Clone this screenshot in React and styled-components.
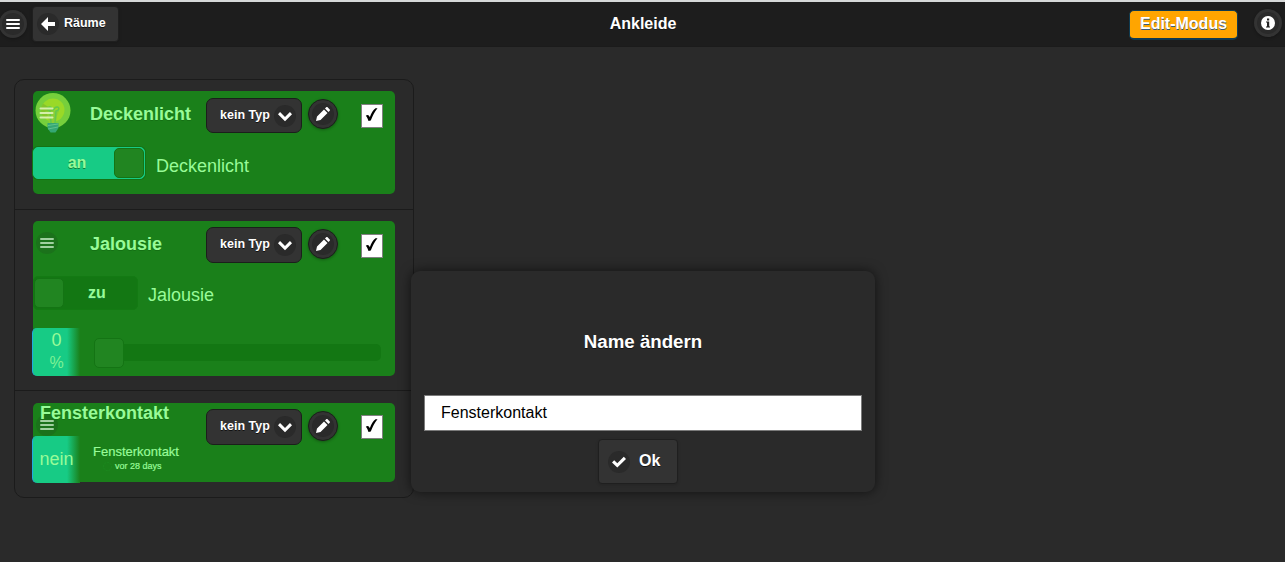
import styled, { createGlobalStyle } from 'styled-components'

const GlobalStyle = createGlobalStyle`
* {
    box-sizing: border-box;
}
body {
    margin: 0;
    background-color: #2a2a2a;
    font-family: "Liberation Sans", Arial, sans-serif;
    line-height: 1;
    color: #fff;
    overflow: hidden;
}
svg {
    display: block;
}
`

const Page = styled.div`
height: 562px;
border-top: 2px solid #d6d8d8;
`

const Header = styled.header`
height: 45px;
display: grid;
grid-template-columns: 1fr auto 1fr;
background-color: #1d1d1d;
border-bottom: 1px solid #1b1b1b;
`

const HeaderSide = styled.div`
display: flex;
align-items: flex-start;
justify-content: ${props => props.$end ? "flex-end" : "flex-start"};
`

const HeaderTitle = styled.h1`
margin: 0;
padding: 14px 0 0 1px;
font-size: 16px;
text-shadow: 0 1px 0 #111;
`

const RoundButton = styled.button`
width: ${props => props.$size || 28}px;
height: ${props => props.$size || 28}px;
margin: ${props => props.$margin || 0};
padding: 0;
display: flex;
align-items: center;
justify-content: center;
flex: none;
border-radius: 50%;
border: ${props => props.$dark ? "1px solid #1b1f1b" : "none"};
background-color: #333;
box-shadow: 0 1px 3px rgba(0, 0, 0, 0.3);
`

const Disc = styled.span`
width: 22px;
height: 22px;
flex: none;
display: flex;
align-items: center;
justify-content: center;
border-radius: 50%;
background-color: ${props => props.$color || "#2a2a2a"};
`

const BackButton = styled.button`
width: 87px;
height: 36px;
margin: 4px 0 0 5px;
padding: 0 0 0 4px;
display: flex;
align-items: center;
gap: 5px;
border: 1px solid #1f1f1f;
border-radius: 4px;
background-color: #333;
color: #fff;
font: bold 12.5px "Liberation Sans", Arial, sans-serif;
text-shadow: 0 1px 0 #111;
box-shadow: 0 1px 3px rgba(0, 0, 0, 0.15);
`

const BackText = styled.span`
padding-bottom: 2px;
`

const EditButton = styled.button`
width: 109px;
height: 30px;
margin: 8px 16px 0 0;
padding: 0 0 1px;
border: 1px solid #0f3a50;
border-bottom-width: 2px;
border-radius: 5px;
background-color: #ffa500;
color: #fff;
font: bold 16px "Liberation Sans", Arial, sans-serif;
text-shadow: 0 1px 0 #3b5a78;
`

const List = styled.ul`
width: 400px;
margin: 32px 0 0 14px;
padding: 0;
list-style: none;
border: 1px solid #1b1b1b;
border-radius: 10px;
`

const Item = styled.li`
padding: ${props => props.$padding};
& + & {
    border-top: 1px solid #1b1b1b;
}
`

const Card = styled.section`
position: relative;
height: ${props => props.$height}px;
border-radius: 5px;
background-color: #1a801a;
color: #98fb98;
`

const CardHead = styled.div`
height: ${props => props.$height}px;
display: grid;
grid-template-columns: 57px 116px 102px 53px auto;
align-items: start;
padding-top: 6px;
`

const Handle = styled.div`
position: relative;
margin: 5px 0 0 3px;
`

const Bulb = styled.svg`
position: absolute;
left: 2px;
top: 2px;
`

const CardTitle = styled.h2`
margin: ${props => props.$raised ? "-5px 0 0 -50px" : "8px 0 0"};
font-size: 18px;
white-space: nowrap;
position: relative;
text-shadow: 0 1px 0 #147014;
`

const Select = styled.button`
width: 96px;
height: ${props => props.$first ? 35 : 36}px;
margin-top: ${props => props.$first ? 1 : 0}px;
padding: 0 5px 0 13px;
display: flex;
align-items: center;
justify-content: space-between;
border: 1px solid #1b1f1b;
border-radius: 7px;
background-color: #333;
color: #fff;
font: bold 12.5px "Liberation Sans", Arial, sans-serif;
white-space: nowrap;
text-shadow: 0 1px 0 #111;
`

const SelectText = styled.span`
padding-bottom: 2px;
`

const Check = styled.div`
width: 22px;
height: 24px;
margin-top: ${props => props.$top}px;
border: 1px solid #808080;
background-color: #fff;
`

const SwitchRow = styled.div`
display: flex;
align-items: flex-start;
`

const Switch = styled.div`
width: ${props => props.$on ? 112 : 105}px;
height: ${props => props.$on ? 32 : 34}px;
padding: ${props => props.$on ? "0" : "1px 0 0"};
display: flex;
flex-direction: ${props => props.$on ? "row-reverse" : "row"};
border: 1px solid ${props => props.$on ? "#17cb85" : "#137a13"};
border-radius: 5px;
background-color: ${props => props.$on ? "#17cb85" : "#137713"};
box-shadow: ${props => props.$on ? "0 0 0 1px #147314" : "none"};
`

const Knob = styled.span`
width: 30px;
height: 30px;
flex: none;
border: 1px solid #147414;
border-radius: 5px;
background-color: #218521;
`

const SwitchText = styled.span`
flex: 1;
padding: ${props => props.$on ? "7px 0 0 6px" : "7px 7px 0 0"};
text-align: center;
font-size: 16px;
font-weight: bold;
text-shadow: 0 1px 0 #147f3a;
`

const SwitchLabel = styled.span`
margin: ${props => props.$on ? "10px 0 0 11px" : "10px 0 0 10px"};
font-size: 18px;
`

const ValueRow = styled.div`
display: flex;
align-items: flex-start;
margin-top: ${props => props.$top}px;
`

const Value = styled.div`
width: 48px;
height: ${props => props.$height}px;
margin-left: -1px;
padding: ${props => props.$pad}px 0 0;
display: flex;
flex-direction: column;
align-items: center;
gap: 6px;
font-size: 18px;
border-left: 1px solid #22aae0;
border-radius: 5px 0 0 5px;
background: linear-gradient(to right, #17cb85 34px, #1a801a 47px);
`

const Unit = styled.small`
font-size: 16px;
opacity: 0.8;
`

const Slider = styled.div`
width: 287px;
height: 30px;
margin: 10px 0 0 14px;
display: flex;
align-items: center;
`

const Track = styled.div`
flex: 1;
height: 17px;
margin: -1px 0 0 -1px;
border-radius: 0 5px 5px 0;
background-color: #137713;
`

const Contact = styled.div`
margin: 9px 0 0 13px;
font-size: 13px;
-webkit-text-stroke: 0.2px #98fb98;
`

const Since = styled.div`
display: flex;
align-items: center;
gap: 3px;
margin: 4px 0 0 10px;
font-size: 9px;
`

const Dialog = styled.div`
position: absolute;
left: 411px;
top: 271px;
width: 464px;
height: 221px;
padding: 61px 13px 0;
display: flex;
flex-direction: column;
align-items: center;
border-radius: 9px;
background-color: #2a2a2a;
box-shadow: 0 0 12px rgba(0, 0, 0, 0.6);
`

const DialogTitle = styled.h3`
margin: 0;
font-size: 18.7px;
line-height: 19px;
text-shadow: 0 1px 0 #111;
`

const Input = styled.input`
width: 438px;
height: 36px;
margin-top: 44px;
padding: 0 16px 1px;
border: 1px solid #7b7b7b;
border-radius: 0;
background-color: #fff;
color: #000;
font: 16px "Liberation Sans", Arial, sans-serif;
`

const OkButton = styled.button`
width: 80px;
height: 45px;
margin: 8px 10px 0 0;
padding: 0 0 0 9px;
display: flex;
align-items: center;
gap: 9px;
border: 1px solid #1f1f1f;
border-radius: 4px;
background-color: #333;
color: #fff;
font: bold 16px "Liberation Sans", Arial, sans-serif;
text-shadow: 0 1px 0 #111;
box-shadow: 0 1px 3px rgba(0, 0, 0, 0.15);
`

const OkText = styled.span`
padding-bottom: 2px;
`

// 14px button glyphs
const glyphs = {
  bars: "M1 2h12a1 1 0 0 1 0 2H1a1 1 0 0 1 0-2zM1 6h12a1 1 0 0 1 0 2H1a1 1 0 0 1 0-2zM1 10h12a1 1 0 0 1 0 2H1a1 1 0 0 1 0-2z",
  arrow: "M7 5V0L0 7l7 7V9h7V5z",
  pencil: "M1 9.5L0 14l4.5-1 7-7L8 2.500zM12.500 5l1.200-1.200c.4-.4.4-1 0-1.400L11.600.3c-.4-.4-1-.4-1.400 0L9 1.500z",
  down: "M11.950 3.100L7 8.050 2.050 3.100 0 5.200l7 7 7-7z",
  check: "M14 4L11.800 1.800 5.300 8.200 2.200 5.200 0 7.400l5.300 5.200z",
}

const Glyph = ({ name, color = "#fff" }) => (
  <svg width="14" height="14" viewBox="0 0 14 14" fill={color}>
    <path d={glyphs[name]} />
  </svg>
)

const CardTools = ({ first, checkTop }) => (
  <>
    <Select $first={first}>
      <SelectText>kein Typ</SelectText>
      <Disc><Glyph name="down" /></Disc>
    </Select>
    <RoundButton $size={30} $dark $margin="2px 0 0">
      <Disc><Glyph name="pencil" /></Disc>
    </RoundButton>
    <Check $top={checkTop}>
      <svg width="20" height="22" viewBox="0 0 20 22">
        <path d="M3.800 10.800c1.600-1.500 3.200-.8 4 1.400C9.300 8 11.200 4.700 13.500 3.200l2 .1C12.600 6.700 10.500 11 8.800 15.600l-2.300.5C5.800 13.800 5 12 3.800 10.800z" />
      </svg>
    </Check>
  </>
)

const DragHandle = () => (
  <Handle>
    <Disc $color="#1b721b"><Glyph name="bars" color="#a0d0a0" /></Disc>
  </Handle>
)

const App = () => {
  return (
<>
<GlobalStyle/>
<Page>
<Header>
<HeaderSide>
    <RoundButton $margin="8px 0 0 -1px"><Disc><Glyph name="bars"/></Disc></RoundButton>
    <BackButton><Disc><Glyph name="arrow"/></Disc><BackText>Räume</BackText></BackButton>
</HeaderSide>
<HeaderTitle>Ankleide</HeaderTitle>
<HeaderSide $end>
    <EditButton>Edit-Modus</EditButton>
    <RoundButton $margin="7px 3px 0 0">
        <Disc>
            <svg width="14" height="14" viewBox="0 0 14 14">
                <circle cx="7" cy="7" r="7" fill="#fff"/>
                <path d="M6 2.500h2.200v2H6zM5 5.500h3.200v5H9v1H5v-1h1v-4H5z" fill="#222"/>
            </svg>
        </Disc>
    </RoundButton>
</HeaderSide>
</Header>
<List>
<Item $padding="11px 18px 15px">
<Card $height={103}>
    <CardHead $height={56}>
        <Handle/>
        <CardTitle>Deckenlicht</CardTitle>
        <CardTools first checkTop={7}/>
    </CardHead>
    <Bulb width="36" height="41" viewBox="0 0 36 41">
        <circle cx="18" cy="17.500" r="17.500" fill="#76cf3c"/>
        <circle cx="18" cy="17" r="11.500" fill="#9ad927"/>
        <path d="M18 17L8 10.500A12 12 0 0 0 10 26z" fill="#83c32c"/>
        <path d="M14 30l-1-7-3-5h14l-2 5-1 7z" fill="#8bce35"/>
        <path d="M16 30l-1-12c-3-1-3-4 0-4 2 0 2 3 3 3s1-3 4-3c3 0 2 4-1 4l-1 12" fill="none" stroke="#62c94b" strokeWidth="1.500"/>
        <path d="M12.500 30h11v5l-3 4.500h-5l-3-4.500z" fill="#35a774"/>
        <path d="M13 32.500l10-1.500M13 36l10-2" stroke="#5fc18c"/>
        <path d="M5.500 15.500h12M5.500 20h12M5.500 24.500h12" stroke="#d5efaa" strokeWidth="2" strokeLinecap="round"/>
    </Bulb>
    <SwitchRow>
        <Switch $on><Knob/><SwitchText $on>an</SwitchText></Switch>
        <SwitchLabel $on>Deckenlicht</SwitchLabel>
    </SwitchRow>
</Card>
</Item>
<Item $padding="11px 18px 14px">
<Card $height={155}>
    <CardHead $height={55}>
        <DragHandle/>
        <CardTitle>Jalousie</CardTitle>
        <CardTools checkTop={7}/>
    </CardHead>
    <SwitchRow>
        <Switch><Knob/><SwitchText>zu</SwitchText></Switch>
        <SwitchLabel>Jalousie</SwitchLabel>
    </SwitchRow>
    <ValueRow $top={18}>
        <Value $height={48} $pad={3}>0<Unit>%</Unit></Value>
        <Slider><Knob/><Track/></Slider>
    </ValueRow>
</Card>
</Item>
<Item $padding="12px 18px 15px">
<Card $height={79}>
    <CardHead $height={33}>
        <DragHandle/>
        <CardTitle $raised>Fensterkontakt</CardTitle>
        <CardTools checkTop={6}/>
    </CardHead>
    <ValueRow $top={0}>
        <Value $height={47} $pad={14}>nein</Value>
        <Contact>
            Fensterkontakt
            <Since>
                <svg width="9" height="9" viewBox="0 0 9 9"><circle cx="4.500" cy="4.500" r="4" fill="none" stroke="#1d8a20" strokeDasharray="2 1"/></svg>
                vor 28 days
            </Since>
        </Contact>
    </ValueRow>
</Card>
</Item>
</List>
</Page>
<Dialog>
<DialogTitle>Name ändern</DialogTitle>
<Input defaultValue="Fensterkontakt"/>
<OkButton><Disc><Glyph name="check"/></Disc><OkText>Ok</OkText></OkButton>
</Dialog>
</>
  )
}

export default App
